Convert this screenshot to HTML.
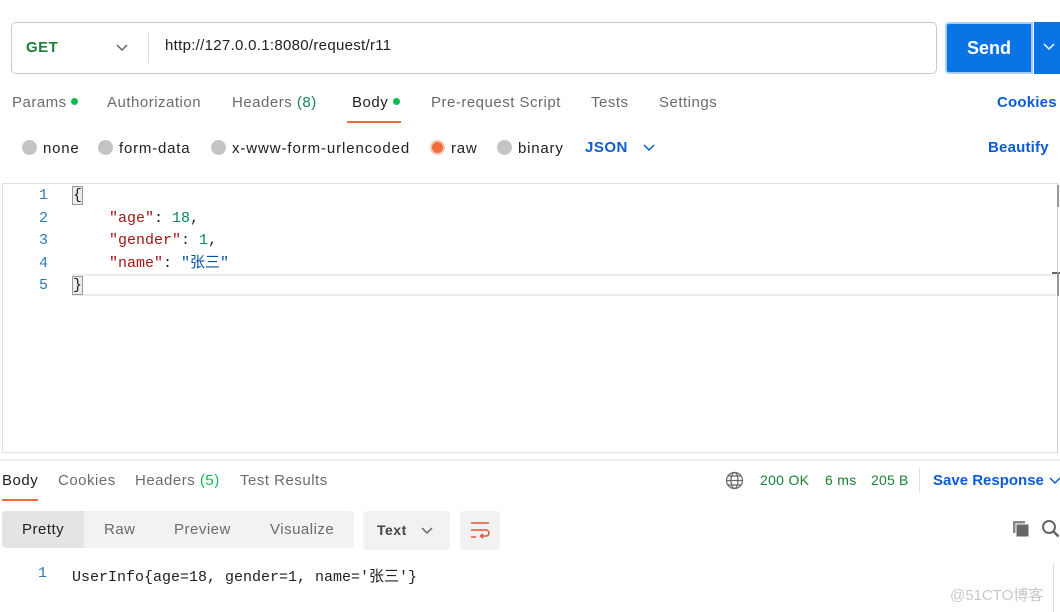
<!DOCTYPE html>
<html><head><meta charset="utf-8"><style>
*{margin:0;padding:0;box-sizing:border-box}
body{width:1060px;height:612px;background:#fff;font-family:"Liberation Sans","Noto Sans CJK SC",sans-serif;font-size:15px;color:#212121;position:relative;overflow:hidden;letter-spacing:0.5px}
.a{position:absolute;white-space:nowrap}
.mono{font-family:"Liberation Mono","Noto Sans CJK SC",monospace;font-size:15px;letter-spacing:0}
.rad{width:15px;height:15px;border-radius:50%;background:#c4c4c4;display:inline-block;position:absolute}
.tab{color:#6b6b6b}
.r{letter-spacing:0.8px}
</style></head><body>
<div class="a" style="left:11px;top:22px;width:926px;height:52px;border:1px solid #c8c8c8;border-radius:5px"></div>
<div class="a" style="left:26px;top:39px;font-weight:bold;color:#1a7f37;font-size:15px">GET</div>
<svg class="a" style="left:115px;top:43px" width="14" height="10"><path d="M2 2l5 5 5-5" fill="none" stroke="#666" stroke-width="1.5"/></svg>
<div class="a" style="left:148px;top:33px;width:1px;height:30px;background:#ddd"></div>
<div class="a" style="left:165px;top:37px;font-size:15px;color:#212121;letter-spacing:0.3px">http://127.0.0.1:8080/request/r11</div>
<div class="a" style="left:945px;top:22px;width:88px;height:52px;background:#0a73e6;border:2px solid #a8cdf5;border-radius:4px 0 0 4px;color:#fff;font-weight:bold;font-size:18px;text-align:center;line-height:48px;letter-spacing:0">Send</div>
<div class="a" style="left:1034px;top:22px;width:26px;height:52px;background:#0a73e6"></div>
<svg class="a" style="left:1042px;top:42px" width="14" height="10"><path d="M2 2l5 5 5-5" fill="none" stroke="#fff" stroke-width="1.5"/></svg>
<div class="a tab" style="left:12px;top:94px">Params <span style="display:inline-block;width:7px;height:7px;border-radius:50%;background:#0cbb52;vertical-align:2px"></span></div>
<div class="a tab" style="left:107px;top:94px">Authorization</div>
<div class="a tab" style="left:232px;top:94px">Headers <span style="color:#1a7f57">(8)</span></div>
<div class="a" style="left:352px;top:94px;color:#212121">Body <span style="display:inline-block;width:7px;height:7px;border-radius:50%;background:#0cbb52;vertical-align:2px"></span></div>
<div class="a" style="left:347px;top:121px;width:54px;height:2px;background:#f26b3a"></div>
<div class="a tab" style="left:431px;top:94px">Pre-request Script</div>
<div class="a tab" style="left:591px;top:94px">Tests</div>
<div class="a tab" style="left:659px;top:94px">Settings</div>
<div class="a" style="left:997px;top:94px;color:#0b5cd5;font-weight:bold;letter-spacing:0.2px">Cookies</div>
<span class="rad" style="left:22px;top:140px"></span><div class="a r" style="left:43px;top:140px">none</div>
<span class="rad" style="left:98px;top:140px"></span><div class="a r" style="left:119px;top:140px">form-data</div>
<span class="rad" style="left:211px;top:140px"></span><div class="a r" style="left:232px;top:140px;letter-spacing:0.9px">x-www-form-urlencoded</div>
<span class="rad" style="left:430px;top:140px;background:#f26b3a;border:2px solid #f5c6b3"></span><div class="a r" style="left:451px;top:140px">raw</div>
<span class="rad" style="left:497px;top:140px"></span><div class="a r" style="left:518px;top:140px">binary</div>
<div class="a" style="left:585px;top:139px;color:#0b5cd5;font-weight:bold">JSON</div>
<svg class="a" style="left:642px;top:143px" width="14" height="10"><path d="M2 2l5 5 5-5" fill="none" stroke="#0b5cd5" stroke-width="1.5"/></svg>
<div class="a" style="left:988px;top:139px;color:#0b5cd5;font-weight:bold;letter-spacing:0.2px">Beautify</div>
<div class="a" style="left:2px;top:183px;width:1056px;height:270px;border:1px solid #e0e0e0;border-right:1px solid #d0d0d0"></div>
<div class="a" style="left:72px;top:274px;width:984px;height:22px;border-top:2px solid #ececec;border-bottom:2px solid #ececec"></div>
<div class="a" style="left:1057px;top:185px;width:2px;height:22px;background:#999"></div>
<div class="a" style="left:1052px;top:272px;width:8px;height:2px;background:#666"></div>
<div class="a" style="left:1057px;top:272px;width:2px;height:24px;background:#999"></div>
<div class="a mono" style="left:20px;top:185px;width:28px;text-align:right;color:#2b7bb9;line-height:22.5px">1<br>2<br>3<br>4<br>5</div>
<div class="a mono" style="left:73px;top:185px;line-height:22.5px;color:#212121">
<span style="background:#e8efe8;outline:1px solid #999">{</span><br>
&nbsp;&nbsp;&nbsp;&nbsp;<span style="color:#a31515">"age"</span>: <span style="color:#098658">18</span>,<br>
&nbsp;&nbsp;&nbsp;&nbsp;<span style="color:#a31515">"gender"</span>: <span style="color:#098658">1</span>,<br>
&nbsp;&nbsp;&nbsp;&nbsp;<span style="color:#a31515">"name"</span>: <span style="color:#0451a5">"张三"</span><br>
<span style="background:#e8efe8;outline:1px solid #999">}</span></div>
<div class="a" style="left:0;top:459px;width:1060px;height:2px;background:#ececec"></div>
<div class="a" style="left:2px;top:472px;color:#212121">Body</div>
<div class="a" style="left:2px;top:499px;width:36px;height:2px;background:#f26b3a"></div>
<div class="a tab" style="left:58px;top:472px">Cookies</div>
<div class="a tab" style="left:135px;top:472px">Headers <span style="color:#0cbb52">(5)</span></div>
<div class="a tab" style="left:240px;top:472px">Test Results</div>
<svg class="a" style="left:725px;top:471px" width="19" height="19"><g fill="none" stroke="#666" stroke-width="1.2"><circle cx="9.5" cy="9.5" r="8"/><ellipse cx="9.5" cy="9.5" rx="3.5" ry="8"/><path d="M1.5 9.5h16M3 5h13M3 14h13"/></g></svg>
<div class="a" style="left:760px;top:472px;color:#1a7f37;font-size:14px;letter-spacing:0.3px">200 OK</div>
<div class="a" style="left:825px;top:472px;color:#1a7f37;font-size:14px;letter-spacing:0.3px">6 ms</div>
<div class="a" style="left:871px;top:472px;color:#1a7f37;font-size:14px;letter-spacing:0.2px">205 B</div>
<div class="a" style="left:919px;top:468px;width:1px;height:25px;background:#e0e0e0"></div>
<div class="a" style="left:933px;top:472px;color:#0b5cd5;font-weight:bold;letter-spacing:0">Save Response</div>
<svg class="a" style="left:1048px;top:476px" width="12" height="10"><path d="M2 2l5 5 5-5" fill="none" stroke="#0b5cd5" stroke-width="1.5"/></svg>
<div class="a" style="left:2px;top:511px;width:352px;height:37px;background:#f2f2f2;border-radius:4px"></div>
<div class="a" style="left:2px;top:511px;width:82px;height:37px;background:#e4e4e4;border-radius:4px 0 0 4px"></div>
<div class="a" style="left:22px;top:521px">Pretty</div>
<div class="a tab" style="left:104px;top:521px">Raw</div>
<div class="a tab" style="left:174px;top:521px">Preview</div>
<div class="a tab" style="left:270px;top:521px">Visualize</div>
<div class="a" style="left:363px;top:511px;width:87px;height:39px;background:#f2f2f2;border-radius:4px"></div>
<div class="a" style="left:377px;top:522px;color:#444;font-weight:bold;font-size:14px">Text</div>
<svg class="a" style="left:420px;top:526px" width="14" height="10"><path d="M2 2l5 5 5-5" fill="none" stroke="#666" stroke-width="1.5"/></svg>
<div class="a" style="left:460px;top:511px;width:40px;height:39px;background:#f2f2f2;border-radius:4px"></div>
<svg class="a" style="left:468px;top:520px" width="24" height="22"><g fill="none" stroke="#e8542f" stroke-width="1.5"><path d="M3 3h18M3 10h15a3 3 0 0 1 0 6h-5M3 17h5"/><path d="M15 14l-2.5 2 2.5 2"/></g></svg>
<svg class="a" style="left:1011px;top:519px" width="20" height="20"><rect x="2" y="2" width="12" height="12" fill="#888"/><rect x="5" y="5" width="13" height="13" fill="#666" stroke="#fff" stroke-width="1"/></svg>
<svg class="a" style="left:1041px;top:519px" width="19" height="20"><circle cx="8" cy="8" r="6" fill="none" stroke="#666" stroke-width="2"/><path d="M12.5 12.5l5 5" stroke="#666" stroke-width="2.5"/></svg>
<div class="a mono" style="left:38px;top:565px;color:#2b7bb9">1</div>
<div class="a mono" style="left:72px;top:565px;color:#212121">UserInfo{age=18, gender=1, name='张三'}</div>
<div class="a" style="left:1053px;top:563px;width:1px;height:49px;background:#ddd"></div>
<div class="a" style="left:950px;top:584px;color:#c8c8c8;font-size:15px;letter-spacing:0">@51CTO博客</div>
</body></html>
